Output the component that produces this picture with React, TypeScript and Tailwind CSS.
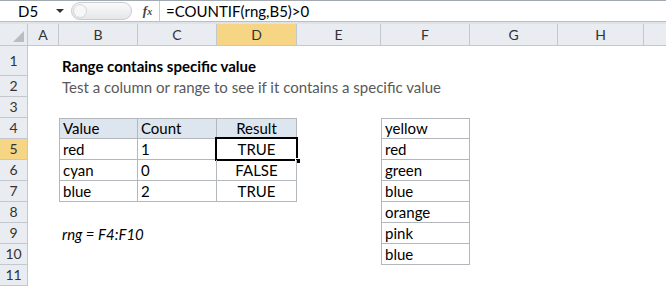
import React from 'react';

const cols = [
  { name: 'A', w: 'w-[31px]' },
  { name: 'B', w: 'w-[79px]' },
  { name: 'C', w: 'w-[79px]' },
  { name: 'D', w: 'w-[80px]' },
  { name: 'E', w: 'w-[84px]' },
  { name: 'F', w: 'w-[89px]' },
  { name: 'G', w: 'w-[88px]' },
  { name: 'H', w: 'w-[86px]' },
];

type CellProps = {
  w: string;
  className?: string;
  children?: React.ReactNode;
};

function Cell({ w, className = '', children }: CellProps) {
  return (
    <div
      className={`${w} shrink-0 flex items-end pb-[1px] px-[3px] whitespace-nowrap relative ${className}`}
    >
      {children}
    </div>
  );
}

function RowHead({ n, active }: { n: number; active?: boolean }) {
  return (
    <div
      className={`w-[28px] shrink-0 flex items-center justify-center border-r border-b border-[#c3c8cf] text-[14px] text-[#333] ${
        active ? 'bg-[#f6d684]' : 'bg-[#e9ecf0]'
      }`}
    >
      {n}
    </div>
  );
}

const tb = 'border-[#b4b8bd]';

export default function App() {
  const list = ['yellow', 'red', 'green', 'blue', 'orange', 'pink', 'blue'];
  const table = [
    ['red', '1', 'TRUE'],
    ['cyan', '0', 'FALSE'],
    ['blue', '2', 'TRUE'],
  ];

  const rowF = (r: number) => {
    const i = r - 4;
    if (i < 0 || i >= list.length) return <Cell w="w-[89px]" />;
    return (
      <Cell
        w="w-[89px]"
        className={`border-l border-r border-b ${tb} ${i === 0 ? 'border-t' : ''}`}
      >
        {list[i]}
      </Cell>
    );
  };

  const rows: React.ReactNode[] = [];
  for (let r = 1; r <= 11; r++) {
    let b: React.ReactNode = <Cell w="w-[79px]" />;
    let c: React.ReactNode = <Cell w="w-[79px]" />;
    let d: React.ReactNode = <Cell w="w-[80px]" />;
    if (r === 1) {
      b = (
        <Cell w="w-[79px]" className="font-bold">
          Range contains specific value
        </Cell>
      );
    } else if (r === 2) {
      b = (
        <Cell w="w-[79px]" className="text-[#595959]">
          Test a column or range to see if it contains a specific value
        </Cell>
      );
    } else if (r === 4) {
      b = (
        <Cell w="w-[79px]" className={`bg-[#dde5ee] border-l border-t border-r border-b ${tb}`}>
          Value
        </Cell>
      );
      c = (
        <Cell w="w-[79px]" className={`bg-[#dde5ee] border-t border-r border-b ${tb}`}>
          Count
        </Cell>
      );
      d = (
        <Cell w="w-[80px]" className={`bg-[#dde5ee] border-t border-r border-b ${tb} justify-center`}>
          Result
        </Cell>
      );
    } else if (r >= 5 && r <= 7) {
      const t = table[r - 5];
      b = (
        <Cell w="w-[79px]" className={`border-l border-r border-b ${tb}`}>
          {t[0]}
        </Cell>
      );
      c = (
        <Cell w="w-[79px]" className={`border-r border-b ${tb}`}>
          {t[1]}
        </Cell>
      );
      d = (
        <Cell w="w-[80px]" className={`border-r border-b ${tb} justify-center`}>
          {t[2]}
          {r === 5 && (
            // active cell outline + fill handle
            <div className="absolute left-[-2px] top-[-2px] right-[-2px] bottom-[-2px] border-2 border-black">
              <div className="absolute right-[-5px] bottom-[-5px] w-[6px] h-[6px] bg-black border border-white" />
            </div>
          )}
        </Cell>
      );
    } else if (r === 9) {
      b = (
        <Cell w="w-[79px]" className="italic">
          rng = F4:F10
        </Cell>
      );
    }
    rows.push(
      <div key={r} className={`flex ${r === 1 ? 'h-[30px]' : 'h-[21px]'}`}>
        <RowHead n={r} active={r === 5} />
        <Cell w="w-[31px]" />
        {b}
        {c}
        {d}
        <Cell w="w-[84px]" />
        {rowF(r)}
        <Cell w="w-[88px]" />
        <Cell w="w-[86px]" />
      </div>
    );
  }

  return (
    <div
      className="w-[666px] h-[291px] overflow-hidden bg-white text-[15px] text-black leading-[18px]"
      style={{ fontFamily: 'Lato, "Open Sans", sans-serif' }}
    >
      {/* formula bar */}
      <div className="h-[22px] flex items-stretch border-t border-[#a3a9b0] border-b border-b-[#b8bec6] bg-white">
        <div className="w-[68px] shrink-0 flex items-center pl-[18px] pr-[4px] justify-between">
          <span>D5</span>
          <span className="w-0 h-0 border-l-[4px] border-r-[4px] border-t-[4px] border-l-transparent border-r-transparent border-t-[#333]" />
        </div>
        <div className="w-[68px] shrink-0 flex items-center pl-[3px] pr-[4px]">
          <div className="h-[18px] w-full rounded-full border border-[#c9ccd1] bg-gradient-to-b from-[#fafafa] to-[#e4e6e9] flex items-center pl-[1px]">
            <div className="w-[14px] h-[14px] rounded-full border border-[#d4d6da] bg-[#f7f7f7]" />
          </div>
        </div>
        <div className="w-[24px] shrink-0 flex items-center justify-center border-r border-[#c9ccd1]">
          <span
            className="italic font-bold text-[13px] text-[#444]"
            style={{ fontFamily: '"Liberation Serif", serif' }}
          >
            f<span className="text-[10px]">x</span>
          </span>
        </div>
        <div className="flex-1 flex items-center pl-[6px]">=COUNTIF(rng,B5)&gt;0</div>
      </div>
      <div className="h-[2px] bg-[#dfe3e8]" />
      {/* column headers */}
      <div className="h-[22px] flex border-b border-[#c3c8cf] text-[14px] text-[#333]">
        <div className="w-[28px] shrink-0 bg-[#e9ecf0] border-r border-[#c3c8cf] flex items-end justify-end p-[3px]">
          <div className="w-0 h-0 border-l-[11px] border-b-[11px] border-l-transparent border-b-[#b9bec4]" />
        </div>
        {cols.map((c) => (
          <div
            key={c.name}
            className={`${c.w} shrink-0 flex items-center justify-center border-r border-[#c3c8cf] ${
              c.name === 'D' ? 'bg-[#f6d684]' : 'bg-[#e9ecf0]'
            }`}
          >
            {c.name}
          </div>
        ))}
        <div className="flex-1 bg-[#e9ecf0]" />
      </div>
      {rows}
    </div>
  );
}
